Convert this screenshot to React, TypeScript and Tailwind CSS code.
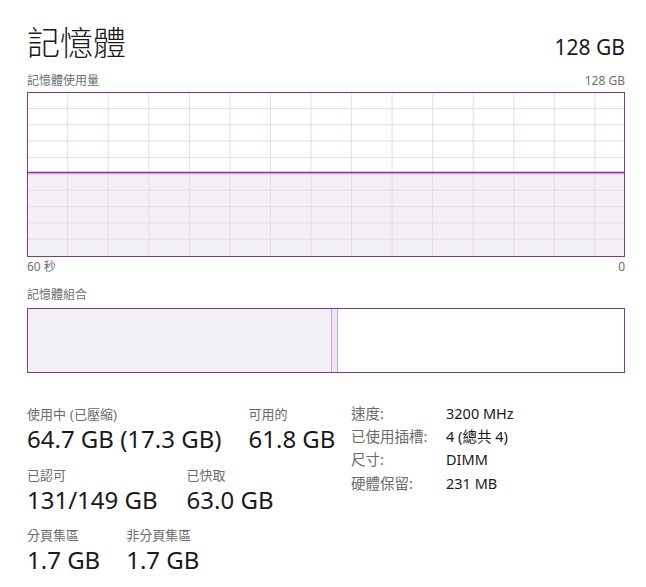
const font = "font-['Noto_Sans','Noto_Sans_CJK_TC',sans-serif]";

function UsageGraph() {
  const w = 596;
  const h = 163;
  const cols = Array.from({ length: 15 }, (_, i) => 39.7 + i * 40.55).filter((x) => x < w);
  const rows = Array.from({ length: 9 }, (_, i) => 15.4 + i * 16.35);
  const fillTop = 79.5;
  return (
    <div className="h-[165px] border border-[#7e3a8e]">
      <svg width={w} height={h} className="block">
        <rect x={0} y={fillTop} width={w} height={h - fillTop} fill="#f3f0f5" />
        {cols.map((x) => (
          <line key={x} x1={x} y1={0} x2={x} y2={h} stroke="#e4dce6" strokeWidth={1} />
        ))}
        {rows.map((y) => (
          <line key={y} x1={0} y1={y} x2={w} y2={y} stroke="#e4dce6" strokeWidth={1} />
        ))}
        <line x1={0} y1={fillTop + 1.6} x2={w} y2={fillTop + 1.6} stroke="#ecc9f2" strokeWidth={1.2} />
        <line x1={0} y1={fillTop} x2={w} y2={fillTop} stroke="#7e3a8e" strokeWidth={1.6} />
      </svg>
    </div>
  );
}

function Stat({ label, value }: { label: string; value: string }) {
  return (
    <div className="flex flex-col">
      <span className="text-[13px] leading-[18px] text-[#6b6b6b] font-['Liberation_Sans','Noto_Sans_CJK_TC',sans-serif]">
        {label}
      </span>
      <span className="mt-[1px] text-[24px] leading-[28px] text-[#1a1a1a]">{value}</span>
    </div>
  );
}

const specs = [
  ["速度:", "3200 MHz"],
  ["已使用插槽:", "4 (總共 4)"],
  ["尺寸:", "DIMM"],
  ["硬體保留:", "231 MB"],
];

export default function App() {
  return (
    <div className={`w-[646px] h-[587px] bg-white pl-[27px] pr-[21px] pt-[21px] overflow-hidden ${font}`}>
      <div className="flex justify-between items-baseline">
        <span className="text-[33px] leading-[44px] font-extralight text-[#1a1a1a]">記憶體</span>
        <span className="text-[21px] leading-[30px] text-[#1a1a1a]">128 GB</span>
      </div>
      <div className="flex justify-between text-[12px] leading-[16px] text-[#707070] mt-[8px] mb-[3px]">
        <span>記憶體使用量</span>
        <span>128 GB</span>
      </div>
      <UsageGraph />
      <div className="flex justify-between text-[12px] leading-[16px] text-[#707070] mt-[2px]">
        <span>60 秒</span>
        <span>0</span>
      </div>
      <div className="text-[12px] leading-[16px] text-[#707070] mt-[12px] mb-[5px]">記憶體組合</div>
      <div className="flex h-[65px] border border-[#7e3a8e]">
        <div className="w-[303px] bg-[#f3f0f5]" />
        <div className="w-[7px] bg-[#efe6f3] border-x border-[#c8a6d2]" />
        <div className="flex-1 bg-white" />
      </div>
      <div className="flex items-start mt-[30px]">
        <div className="w-[324px] flex flex-col pt-[3px]">
          <div className="flex gap-[27px]">
            <Stat label="使用中 (已壓縮)" value="64.7 GB (17.3 GB)" />
            <Stat label="可用的" value="61.8 GB" />
          </div>
          <div className="flex gap-[29px] mt-[14px]">
            <Stat label="已認可" value="131/149 GB" />
            <Stat label="已快取" value="63.0 GB" />
          </div>
          <div className="flex gap-[26px] mt-[13px]">
            <Stat label="分頁集區" value="1.7 GB" />
            <Stat label="非分頁集區" value="1.7 GB" />
          </div>
        </div>
        <div className="grid grid-cols-[95px_auto] content-start text-[14.5px] leading-[23.2px] -mt-[1px]">
          {specs.map(([k, v]) => (
            <div key={k} className="contents">
              <span className="text-[#6b6b6b]">{k}</span>
              <span className="text-[#1a1a1a]">{v}</span>
            </div>
          ))}
        </div>
      </div>
    </div>
  );
}
